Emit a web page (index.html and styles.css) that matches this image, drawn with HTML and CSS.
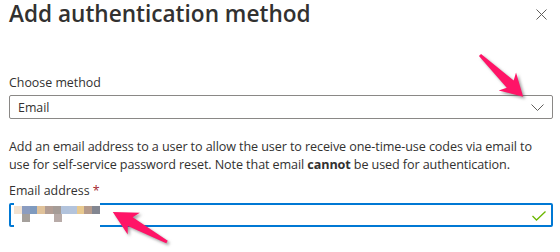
FILE: index.html
```html
<!DOCTYPE html>
<html lang="en">
<head>
    <meta charset="utf-8">
    <title>Add authentication method</title>
    <link rel="stylesheet" href="styles.css">
</head>
<body>
<div class="panel">
    <div class="panel-header">
        <h1>Add authentication method</h1>
        <button class="close-btn" aria-label="Close">
            <svg width="11" height="11" viewBox="0 0 11 11"><path d="M0.5 0.5L10.5 10.5M10.5 0.5L0.5 10.5" stroke="#605e5c" stroke-width="1" fill="none"/></svg>
        </button>
    </div>

    <div class="field method-field">
        <label for="method">Choose method</label>
        <div class="select">
            <span id="method">Email</span>
            <svg class="chevron" width="13" height="7" viewBox="0 0 13 7"><path d="M0.5 0.5L6.5 6.5L12.5 0.5" stroke="#605e5c" stroke-width="1" fill="none"/></svg>
        </div>
    </div>

    <p class="description">Add an email address to a user to allow the user to receive one-time-use codes via email to use for self-service password reset. Note that email <b>cannot</b> be used for authentication.</p>

    <div class="field">
        <label for="email">Email address <span class="required">*</span></label>
        <div class="input">
            <div class="redacted">
                <div class="px-row">
                    <i style="background:#f3e2d0"></i><i style="background:#8b9cc0"></i><i style="background:#7f9abe"></i><i style="background:#e0c29a"></i><i style="background:#b29d94"></i><i style="background:#a59c97"></i><i style="background:#b2c3dc"></i><i style="background:#b4c4dc"></i><i style="background:#e8c98f"></i><i style="background:#b49a8c"></i><i style="background:#838691"></i>
                </div>
                <div class="px-row">
                    <i></i><i style="background:#a5a09c"></i><i></i><i></i><i></i><i style="background:#b8aba8"></i>
                </div>
            </div>
            <svg class="check" width="14" height="10" viewBox="0 0 14 10"><path d="M0.5 5L4.5 9L13.5 0.5" stroke="#6bb700" stroke-width="1.3" fill="none"/></svg>
        </div>
    </div>
</div>

<svg class="arrow arrow-method" width="70" height="70" viewBox="0 0 70 70">
    <polygon points="0,-1.5 42,-5 38,-12.5 60,0 38,12.5 42,5 0,1.5" transform="translate(6 9) rotate(44)" fill="#ff1467"/>
</svg>
<svg class="arrow arrow-email" width="80" height="60" viewBox="0 0 80 60">
    <polygon points="0,-1.5 42,-5 38,-12.5 62,0 38,12.5 42,5 0,1.5" transform="translate(63 50) rotate(209)" fill="#ff1467"/>
</svg>
</body>
</html>
```

FILE: styles.css
```css
body {
    margin: 0;
    font-family: 'Open Sans', sans-serif;
    color: #323130;
    background: #fff;
}
.panel {
    padding: 0 7px 0 9px;
}
.panel-header {
    display: flex;
    justify-content: space-between;
    align-items: flex-start;
}
.panel-header h1 {
    margin: 0;
    font-size: 22.6px;
    font-weight: 600;
    line-height: 28px;
}
.close-btn {
    border: none;
    background: none;
    padding: 0;
    margin: 9px 6px 0 0;
    line-height: 0;
    cursor: pointer;
}
.field label {
    display: block;
    font-size: 12.4px;
    line-height: 18px;
    margin-bottom: 3px;
}
.method-field {
    margin-top: 46px;
}
.select {
    display: flex;
    justify-content: space-between;
    align-items: center;
    height: 22px;
    border: 1px solid #8a8886;
    border-radius: 2px;
    padding: 0 8px;
    font-size: 12.4px;
}
.chevron {
    margin-top: 1px;
}
.description {
    max-width: 530px;
    font-size: 12.6px;
    letter-spacing: -0.1px;
    line-height: 18px;
    margin: 19px 0 8px;
}
.required {
    color: #a4262c;
}
.input {
    position: relative;
    display: flex;
    justify-content: flex-end;
    align-items: center;
    height: 20px;
    border: 2px solid #0078d4;
    border-radius: 2px;
    padding: 0 5px 0 0;
}
.redacted {
    position: absolute;
    left: 3px;
    top: -2px;
    width: 86px;
    height: 24px;
    padding-top: 3px;
    background: #fff;
}
.px-row {
    display: flex;
}
.px-row i {
    width: 8px;
    height: 8px;
}
.check {
    margin-top: 1px;
}
.arrow {
    position: absolute;
    filter: drop-shadow(2px 2px 1.5px rgba(80, 80, 80, 0.55));
}
.arrow-method {
    left: 474px;
    top: 46px;
}
.arrow-email {
    left: 104px;
    top: 192px;
}
```
